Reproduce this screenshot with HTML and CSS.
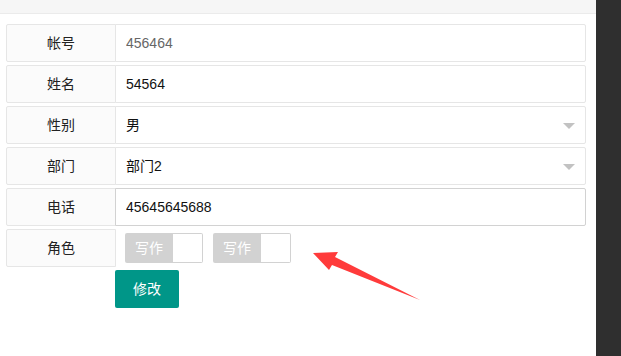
FILE: index.html
```
<!DOCTYPE html>
<html lang="zh-CN">
<head>
    <meta charset="UTF-8">
    <title>编辑用户</title>
    <link rel="stylesheet" href="styles.css">
</head>
<body>

<div class="page">
    <div class="main">
        <div class="topbar"></div>

        <form class="form-pane">
            <div class="form-item">
                <label class="form-label">帐号</label>
                <div class="input-block">
                    <input class="input readonly" type="text" value="456464" readonly>
                </div>
            </div>
            <div class="form-item">
                <label class="form-label">姓名</label>
                <div class="input-block">
                    <input class="input" type="text" value="54564">
                </div>
            </div>
            <div class="form-item">
                <label class="form-label">性别</label>
                <div class="input-block">
                    <div class="select">
                        <span class="select-value">男</span>
                        <i class="edge"></i>
                    </div>
                </div>
            </div>
            <div class="form-item">
                <label class="form-label">部门</label>
                <div class="input-block">
                    <div class="select">
                        <span class="select-value">部门2</span>
                        <i class="edge"></i>
                    </div>
                </div>
            </div>
            <div class="form-item">
                <label class="form-label">电话</label>
                <div class="input-block">
                    <input class="input hover" type="text" value="45645645688">
                </div>
            </div>
            <div class="form-item">
                <label class="form-label">角色</label>
                <div class="input-block checks">
                    <div class="checkbox"><span>写作</span><i></i></div>
                    <div class="checkbox"><span>写作</span><i></i></div>
                </div>
            </div>
            <div class="form-actions">
                <button type="button" class="btn">修改</button>
            </div>
        </form>

        <!-- annotation arrow -->
        <svg class="arrow" width="621" height="356" viewBox="0 0 621 356">
            <polygon points="313,253 338,252 335,257 420,300 332,265 329,270" fill="#ff3b3b"/>
        </svg>
    </div>
    <div class="side"></div>
</div>

</body>
</html>
```

FILE: styles.css
```
html, body {
    margin: 0;
    padding: 0;
    height: 100%;
}
body {
    font-family: "Liberation Sans", "Noto Sans CJK SC", sans-serif;
    font-size: 14px;
    color: #333;
    background-color: #fff;
}
.page {
    display: flex;
    height: 356px;
    overflow: hidden;
}
.main {
    flex: 1;
    position: relative;
}
.side {
    width: 25px;
    background-color: #2f2f2f;
}
.topbar {
    height: 13px;
    background-color: #f6f6f6;
    border-bottom: 1px solid #ebebeb;
}
.form-pane {
    margin: 10px 10px 0 6px;
}
.form-item {
    display: flex;
    margin-bottom: 3px;
}
.form-label {
    box-sizing: border-box;
    width: 110px;
    height: 38px;
    line-height: 36px;
    text-align: center;
    background-color: #fbfbfb;
    border: 1px solid #e6e6e6;
    border-radius: 2px 0 0 2px;
    color: #222;
    flex-shrink: 0;
}
.input-block {
    flex: 1;
    margin-left: -1px;
}
.input,
.select {
    box-sizing: border-box;
    display: block;
    width: 100%;
    height: 38px;
    padding-left: 10px;
    border: 1px solid #e6e6e6;
    border-radius: 0 2px 2px 0;
    font-family: inherit;
    font-size: 14px;
    color: #111;
    background-color: #fff;
    outline: none;
    margin: 0;
}
.input.readonly {
    color: #666;
}
.input.hover {
    border-color: #d2d2d2;
}
.select {
    position: relative;
    line-height: 36px;
}
.edge {
    position: absolute;
    right: 10px;
    top: 16px;
    width: 0;
    height: 0;
    border-width: 6px 6px 0 6px;
    border-style: solid;
    border-color: #c2c2c2 transparent transparent transparent;
}
.checks {
    display: flex;
    align-items: flex-start;
    margin-left: 9px;
}
.checkbox {
    display: flex;
    height: 30px;
    margin: 4px 10px 4px 0;
    line-height: 30px;
}
.checkbox span {
    padding: 0 10px;
    background-color: #d2d2d2;
    color: #fff;
    border-radius: 2px 0 0 2px;
}
.checkbox i {
    box-sizing: border-box;
    width: 30px;
    border: 1px solid #d2d2d2;
    border-left: none;
    border-radius: 0 2px 2px 0;
    background-color: #fff;
}
.form-actions {
    padding-left: 109px;
}
.btn {
    height: 38px;
    padding: 0 18px;
    line-height: 38px;
    border: none;
    border-radius: 2px;
    background-color: #009688;
    color: #fff;
    font-family: inherit;
    font-size: 14px;
    cursor: pointer;
}
.arrow {
    position: absolute;
    left: 0;
    top: 0;
    pointer-events: none;
}
```
